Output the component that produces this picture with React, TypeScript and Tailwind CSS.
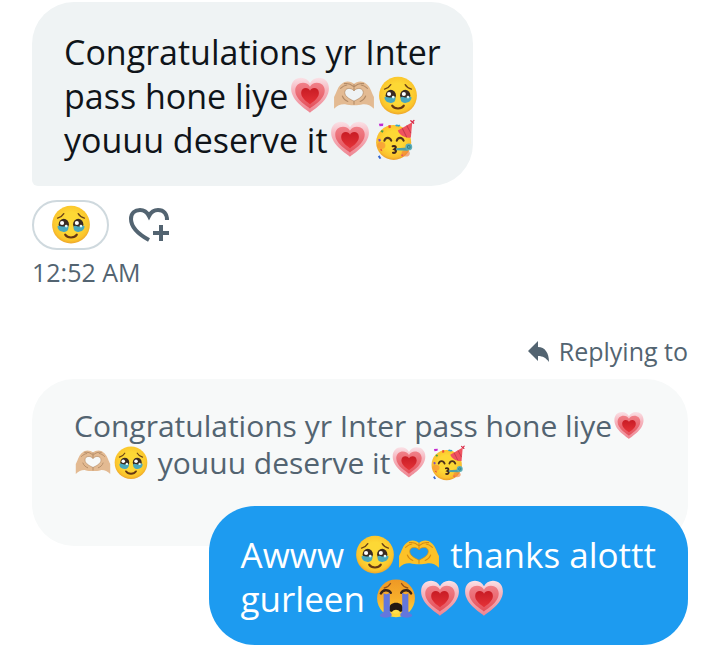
const heartPath =
  "M64 113C58 105 9 80 9 42C9 22 22 11 38 11C50 11 59 17 64 27C69 17 78 11 90 11C106 11 119 22 119 42C119 80 70 105 64 113Z";

type EmojiProps = { className: string };

function GrowingHeart({ className }: EmojiProps) {
  return (
    <svg viewBox="0 0 128 128" className={className} role="img" aria-label="growing heart">
      <defs>
        <linearGradient id="heartOuter" x1="0" y1="0" x2="0" y2="1">
          <stop offset="0" stopColor="#fae1e6" />
          <stop offset="0.35" stopColor="#f6b6bf" />
          <stop offset="1" stopColor="#ee8490" />
        </linearGradient>
        <linearGradient id="heartMid" x1="0" y1="0" x2="0" y2="1">
          <stop offset="0" stopColor="#f08088" />
          <stop offset="1" stopColor="#e4505a" />
        </linearGradient>
        <linearGradient id="heartCore" x1="0" y1="0" x2="0" y2="1">
          <stop offset="0" stopColor="#c81c24" />
          <stop offset="1" stopColor="#e53238" />
        </linearGradient>
      </defs>
      <path d={heartPath} fill="url(#heartOuter)" />
      <path
        d={heartPath}
        fill="url(#heartMid)"
        transform="translate(14 17) scale(0.78 0.74)"
      />
      <path
        d={heartPath}
        fill="url(#heartCore)"
        transform="translate(34 36) scale(0.47 0.46)"
      />
    </svg>
  );
}

function HeartHands({ className, tone = "yellow" }: EmojiProps & { tone?: "yellow" | "light" }) {
  const fill = tone === "yellow" ? "#fcc228" : "#e3ba92";
  const line = tone === "yellow" ? "#d68a12" : "#b28a66";
  return (
    <svg viewBox="0 0 128 128" className={className} role="img" aria-label="heart hands">
      <path
        fillRule="evenodd"
        d="M6 101V67C10 60 13 51 17 43C22 32 34 22 45 22C53 22 60 25 64 29C68 25 75 22 83 22C94 22 106 32 111 43C115 51 118 60 122 67V101C112 91 102 87 90 88C82 90 74 91 64 91C54 91 46 90 38 88C26 87 16 91 6 101ZM64 79C56 75 37 67 37 54C37 40 55 38 64 49C73 38 91 40 91 54C91 67 72 75 64 79Z"
        fill={fill}
      />
      <path
        d="M37 54C37 40 55 38 64 49C73 38 91 40 91 54C91 67 72 75 64 79C56 75 37 67 37 54Z"
        fill="none"
        stroke={line}
        strokeWidth="2"
      />
      <path
        d="M25 42C31 36 37 33 43 32M36 28C46 26 56 30 62 36M64 30V47M103 42C97 36 91 33 85 32M92 28C82 26 72 30 66 36M64 79V88M30 64C33 72 38 77 46 80M98 64C95 72 90 77 82 80"
        fill="none"
        stroke={line}
        strokeWidth="3"
        strokeLinecap="round"
      />
    </svg>
  );
}

function TearyFace({ className }: EmojiProps) {
  return (
    <svg viewBox="0 0 128 128" className={className} role="img" aria-label="face holding back tears">
      <defs>
        <radialGradient id="faceYellow" cx="0.5" cy="0.45" r="0.55">
          <stop offset="0.5" stopColor="#fdd835" />
          <stop offset="0.85" stopColor="#fbc52c" />
          <stop offset="1" stopColor="#eda52a" />
        </radialGradient>
      </defs>
      <circle cx="64" cy="63" r="55" fill="url(#faceYellow)" />
      <path
        d="M25 44C33 42 39 38 43 31M103 44C95 42 89 38 85 31"
        fill="none"
        stroke="#6d4518"
        strokeWidth="4"
        strokeLinecap="round"
      />
      <ellipse cx="43" cy="62" rx="15" ry="16" fill="#392a22" />
      <ellipse cx="85" cy="62" rx="15" ry="16" fill="#392a22" />
      <path
        d="M25 67C31 63 38 71 44 68C50 66 54 65 57 69C57 80 51 85 42 84C31 83 24 76 25 67ZM71 69C74 65 78 66 84 68C90 71 97 63 103 67C104 76 97 83 86 84C77 85 71 80 71 69Z"
        fill="#49a8bd"
      />
      <circle cx="38" cy="58" r="6" fill="#fff" />
      <circle cx="81" cy="58" r="6" fill="#fff" />
      <circle cx="50" cy="67" r="4" fill="#e4f8fa" />
      <circle cx="93" cy="67" r="4" fill="#e4f8fa" />
      <path
        d="M47 92C54 103 74 103 81 92"
        fill="none"
        stroke="#653714"
        strokeWidth="6"
        strokeLinecap="round"
      />
    </svg>
  );
}

function PartyFace({ className }: EmojiProps) {
  return (
    <svg viewBox="0 0 128 128" className={className} role="img" aria-label="partying face">
      <defs>
        <radialGradient id="partyYellow" cx="0.5" cy="0.45" r="0.55">
          <stop offset="0.5" stopColor="#fdd835" />
          <stop offset="0.85" stopColor="#fbc12d" />
          <stop offset="1" stopColor="#ec9f2a" />
        </radialGradient>
      </defs>
      <circle cx="63" cy="71" r="51" fill="url(#partyYellow)" />
      <ellipse cx="27" cy="80" rx="12" ry="10" fill="#f58a3a" opacity="0.6" />
      <ellipse cx="98" cy="103" rx="12" ry="9" fill="#f27d3a" opacity="0.6" />
      <path
        d="M36 66C39 55 52 55 56 66M72 66C75 55 88 55 92 66"
        fill="none"
        stroke="#50331c"
        strokeWidth="6"
        strokeLinecap="round"
      />
      <path
        d="M60 82C68 80 73 85 65 91C73 94 70 103 61 101"
        fill="none"
        stroke="#40261b"
        strokeWidth="6"
        strokeLinecap="round"
      />
      <path d="M70 88L104 86V95L70 94Z" fill="#4e9fa7" />
      <circle cx="107" cy="84" r="10" fill="#5baeb8" />
      <circle cx="107" cy="84" r="4" fill="none" stroke="#2f7f8a" strokeWidth="3" />
      <path d="M75 36L117 12L113 57C97 58 81 51 75 36Z" fill="#ef5360" />
      <path
        d="M88 30L101 56M101 22L113 44"
        stroke="#c53a4d"
        strokeWidth="3"
      />
      <path
        d="M117 12L113 8M117 12L122 7M117 12L121 15"
        stroke="#d92c49"
        strokeWidth="4"
        strokeLinecap="round"
      />
      <path d="M20 17L33 16L32 23L22 24Z" fill="#c32bd0" />
      <path d="M47 22L54 20L55 28L49 30Z" fill="#ec4c35" />
      <path d="M69 23C73 18 76 26 81 21" fill="none" stroke="#35a8c7" strokeWidth="5" />
      <path d="M28 35L34 37L31 43L25 40Z" fill="#4a9e47" />
      <path d="M18 62L24 60L26 67L20 69Z" fill="#7d4bc2" />
      <path d="M17 112L22 108L27 117L22 119Z" fill="#3566cf" />
      <path d="M22 92L28 90L30 97Z" fill="#e7453c" />
      <path d="M83 107L90 106L89 113Z" fill="#e04b6a" />
    </svg>
  );
}

function SobbingFace({ className }: EmojiProps) {
  return (
    <svg viewBox="0 0 128 128" className={className} role="img" aria-label="loudly crying face">
      <defs>
        <linearGradient id="sobOrange" x1="0" y1="0" x2="0" y2="1">
          <stop offset="0" stopColor="#ee9825" />
          <stop offset="0.5" stopColor="#f8ae2b" />
          <stop offset="1" stopColor="#ffdc3d" />
        </linearGradient>
      </defs>
      <circle cx="64" cy="62" r="55" fill="url(#sobOrange)" />
      <path
        d="M30 32C36 31 44 26 48 19M98 32C92 31 84 26 80 19"
        fill="none"
        stroke="#935119"
        strokeWidth="4"
        strokeLinecap="round"
      />
      <path
        d="M20 48C25 36 42 35 49 46M108 48C103 36 86 35 79 46"
        fill="none"
        stroke="#37241b"
        strokeWidth="7"
        strokeLinecap="round"
      />
      <path d="M42 97C42 68 86 68 86 97C82 105 46 105 42 97Z" fill="#231914" />
      <path d="M52 102C58 93 70 93 76 102C73 109 55 109 52 102Z" fill="#ffe04a" />
      <path
        d="M28 47C34 52 41 50 46 46V98C46 105 54 106 51 113C47 120 19 120 17 113C16 106 28 106 28 98ZM82 46C87 50 94 52 100 47V98C100 106 112 106 111 113C109 120 81 120 77 113C74 106 82 105 82 98Z"
        fill="#6377dd"
      />
    </svg>
  );
}

function AddReactionIcon() {
  return (
    <svg width="42" height="36" viewBox="0 0 42 36" fill="none" stroke="currentColor" strokeWidth="4" aria-hidden="true">
      <path d="M20 33C9 27 2 20 2 12C2 6 6 3 11 3C15 3 18 5 20 9C22 5 25 3 29 3C35 3 38 7 38 13" />
      <path d="M32 18V34M24 26H40" />
    </svg>
  );
}

function ReplyIcon() {
  return (
    <svg width="24" height="24" viewBox="0 0 24 24" fill="currentColor" aria-hidden="true">
      <path d="M1 12L11 2V8C18 8 22 14 22 23C19 19 16 17 11 17V22Z" />
    </svg>
  );
}

export default function App() {
  return (
    <main className="flex flex-col bg-white px-8 pt-[2px] pb-2 font-['Open_Sans',sans-serif] text-[#536471]">
      {/* Incoming message */}
      <div className="self-start rounded-[42px] rounded-bl-[6px] bg-[#eff3f4] px-8 pt-7 pb-6 text-[34px] leading-[44px] text-[#0f1419]">
        <p className="flex h-11 items-center whitespace-pre">Congratulations yr Inter</p>
        <p className="flex h-11 items-center whitespace-pre">
          pass hone liye
          <GrowingHeart className="size-11" />
          <HeartHands className="size-11" tone="light" />
          <TearyFace className="size-11" />
        </p>
        <p className="flex h-11 items-center whitespace-pre">
          youuu deserve it
          <GrowingHeart className="size-11" />
          <PartyFace className="size-11" />
        </p>
      </div>

      {/* Reactions */}
      <div className="mt-[14px] flex items-center gap-5">
        <button
          type="button"
          aria-label="Reaction"
          className="flex h-[50px] w-[77px] items-center justify-center rounded-full border-2 border-[#cfd9de]"
        >
          <TearyFace className="size-11" />
        </button>
        <button type="button" aria-label="Add reaction">
          <AddReactionIcon />
        </button>
      </div>
      <time className="mt-1 text-[25px] leading-9">12:52 AM</time>

      {/* Reply */}
      <div className="mt-[43px] flex items-center gap-2 self-end text-[25px] leading-9">
        <ReplyIcon />
        Replying to
      </div>
      <blockquote className="mt-[10px] rounded-[42px] bg-[#f7f9f9] px-[42px] pt-7 pb-[65px] text-[30px] leading-[37px]">
        <p className="flex h-[37px] items-center whitespace-pre">
          Congratulations yr Inter pass hone liye
          <GrowingHeart className="size-[38px]" />
        </p>
        <p className="flex h-[37px] items-center whitespace-pre">
          <HeartHands className="size-[38px]" tone="light" />
          <TearyFace className="size-[38px]" />
          {" youuu deserve it"}
          <GrowingHeart className="size-[38px]" />
          <PartyFace className="size-[38px]" />
        </p>
      </blockquote>
      <div className="relative -mt-10 self-end rounded-[46px] bg-[#1d9bf0] px-8 pt-[27px] pb-6 text-[35px] leading-[44px] text-white">
        <p className="flex h-11 items-center whitespace-pre">
          {"Awww "}
          <TearyFace className="size-11" />
          <HeartHands className="size-11" />
          {" thanks alottt"}
        </p>
        <p className="flex h-11 items-center whitespace-pre">
          {"gurleen "}
          <SobbingFace className="size-11" />
          <GrowingHeart className="size-11" />
          <GrowingHeart className="size-11" />
        </p>
      </div>
    </main>
  );
}
